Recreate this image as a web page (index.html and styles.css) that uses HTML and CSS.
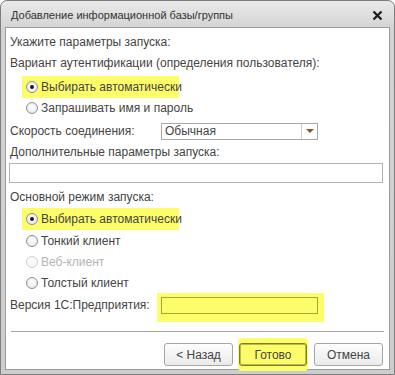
FILE: index.html
```html
<!DOCTYPE html>
<html lang="ru">
<head>
  <meta charset="UTF-8">
  <title>Добавление информационной базы/группы</title>
  <link rel="stylesheet" href="styles.css">
</head>
<body>
  <div class="window">
    <div class="titlebar">
      <span class="title">Добавление информационной базы/группы</span>
      <svg class="close" width="11" height="11" viewBox="0 0 11 11"><path d="M1.5 1.5 L9.5 9.5 M9.5 1.5 L1.5 9.5" stroke="#1e1e1e" stroke-width="2.3" fill="none"/></svg>
    </div>
    <div class="content">
      <div class="line first">Укажите параметры запуска:</div>
      <div class="line">Вариант аутентификации (определения пользователя):</div>
      <div class="option mark top"><span class="radio on"></span>Выбирать автоматически</div>
      <div class="option short"><span class="radio"></span>Запрашивать имя и пароль</div>
      <div class="field-row speed">
        <span class="label">Скорость соединения:</span>
        <div class="select"><span class="value">Обычная</span><span class="arrow-btn"><span class="arrow"></span></span></div>
      </div>
      <div class="line extra">Дополнительные параметры запуска:</div>
      <div class="input wide"></div>
      <div class="line mode">Основной режим запуска:</div>
      <div class="option mark"><span class="radio on"></span>Выбирать автоматически</div>
      <div class="option"><span class="radio"></span>Тонкий клиент</div>
      <div class="option disabled"><span class="radio"></span>Веб-клиент</div>
      <div class="option"><span class="radio"></span>Толстый клиент</div>
      <div class="field-row version">
        <span class="label">Версия 1С:Предприятия:</span>
        <div class="mark-box"><div class="input version-input"></div></div>
      </div>
      <div class="separator"></div>
      <div class="buttons">
        <button class="btn">&lt; Назад</button>
        <button class="btn default">Готово</button>
        <button class="btn last">Отмена</button>
      </div>
    </div>
  </div>
</body>
</html>
```

FILE: styles.css
```css
body { margin: 0; background: #fff; font-family: "Liberation Sans", Arial, sans-serif; font-size: 12px; color: #444; }
.window { box-sizing: border-box; width: 395px; height: 375px; display: flex; flex-direction: column; border: 1px solid #7d7d7d; border-radius: 7px 7px 0 0; padding: 0 4px 4px 4px; background: linear-gradient(#e9e9e9, #d3d3d3 28px, #cdcdcd); }
.titlebar { height: 26px; display: flex; align-items: center; justify-content: space-between; padding: 2px 7px 0 6px; box-sizing: border-box; }
.title { color: #333; font-size: 11px; }
.close { display: block; }
.content { flex: 1; background: #fff; border: 1px solid #9c9c9c; padding: 0 5px 0 4px; display: flex; flex-direction: column; }
.line { height: 21px; line-height: 21px; white-space: nowrap; }
.line.first { margin-top: 4px; }
.line.extra { height: 20px; line-height: 20px; margin-top: 1px; }
.line.mode { height: 20px; line-height: 20px; margin-top: 4px; }
.option { height: 21px; display: flex; align-items: center; margin-left: 12px; width: 157px; padding-left: 4px; box-sizing: border-box; white-space: nowrap; }
.option.short { height: 20px; }
.option.mark { height: 22px; margin-top: 1px; background: #fdfd6a; }
.option.mark.top { margin-top: 2px; }
.option.disabled { color: #b4b4b4; }
.radio { position: relative; box-sizing: border-box; width: 12px; height: 12px; flex: none; margin-right: 3px; border-radius: 50%; border: 1px solid #8e8f8f; background: radial-gradient(circle at 50% 40%, #fff, #e4e4e4); }
.radio.on::after { content: ""; position: absolute; left: 3px; top: 3px; width: 4px; height: 4px; border-radius: 50%; background: #1b1b1b; }
.option.disabled .radio { border-color: #cfcfcf; background: #fafafa; }
.field-row { display: flex; align-items: center; }
.field-row.speed { height: 20px; margin-top: 3px; }
.field-row .label { width: 151px; flex: none; white-space: nowrap; }
.select { box-sizing: border-box; width: 157px; height: 17px; border: 1px solid #a9a9a9; display: flex; align-items: center; justify-content: space-between; }
.select .value { padding-left: 3px; line-height: 15px; }
.arrow-btn { width: 15px; height: 15px; border-left: 1px solid #cfcfcf; display: flex; align-items: center; justify-content: center; }
.arrow { width: 0; height: 0; border-left: 4px solid transparent; border-right: 4px solid transparent; border-top: 4px solid #7b5a2e; }
.input { box-sizing: border-box; border: 1px solid #b3b3b3; background: #fff; }
.input.wide { height: 20px; margin: 1px 1px 0 -1px; }
.field-row.version { align-items: flex-start; height: 29px; }
.field-row.version .label { width: 147px; padding-top: 4px; line-height: 17px; }
.mark-box { background: #fdfd6a; padding: 4px 6px 8px 4px; }
.version-input { width: 157px; height: 17px; background: #fdfd6a; border-color: #a5a53c; }
.separator { height: 1px; background: #a4a4a4; margin: 9px 0 0 1px; }
.buttons { display: flex; justify-content: flex-end; margin-top: 11px; margin-right: 1px; }
.btn { box-sizing: border-box; width: 69px; height: 23px; margin-left: 6px; border: 1px solid #a6a6a6; border-radius: 3px; background: linear-gradient(#fdfdfd, #ebebeb); font-family: "Liberation Sans", Arial, sans-serif; font-size: 12px; color: #444; padding: 0; }
.btn.default { width: 68px; background: #fdfd6a; border-color: #7d7d2c; box-shadow: inset 0 0 0 1px #b9b94c, 0 -4px 0 1px #fdfd6a, 0 4px 0 1px #fdfd6a; }
.btn.last { margin-left: 7px; }
```
